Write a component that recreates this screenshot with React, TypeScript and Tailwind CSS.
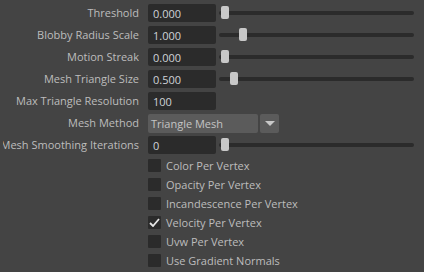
import { useState } from 'react'

type SliderRow = { label: string; value: string; pos?: number }

const fields: SliderRow[] = [
  { label: 'Threshold', value: '0.000', pos: 0 },
  { label: 'Blobby Radius Scale', value: '1.000', pos: 18 },
  { label: 'Motion Streak', value: '0.000', pos: 0 },
  { label: 'Mesh Triangle Size', value: '0.500', pos: 9 },
  { label: 'Max Triangle Resolution', value: '100' },
]

const checks = [
  { label: 'Color Per Vertex', on: false },
  { label: 'Opacity Per Vertex', on: false },
  { label: 'Incandescence Per Vertex', on: false },
  { label: 'Velocity Per Vertex', on: true },
  { label: 'Uvw Per Vertex', on: false },
  { label: 'Use Gradient Normals', on: false },
]

function Label({ text }: { text: string }) {
  return (
    <div className="ml-[3px] w-[136px] shrink-0 flex justify-end overflow-hidden whitespace-nowrap text-[#bdbdbd]">
      <span>{text}</span>
    </div>
  )
}

function Slider({ pos }: { pos: number }) {
  return (
    <div className="relative ml-[3px] w-[195px] h-[18px] flex items-center">
      <div className="w-full h-[4px] rounded-[2px] bg-[#2b2b2b]" />
      <div
        className="absolute top-[2px] w-[8px] h-[13px] rounded-[2px] bg-[#c8c8c8]"
        style={{ left: 2 + pos }}
      />
    </div>
  )
}

export default function App() {
  const [state, setState] = useState(checks.map(c => c.on))

  return (
    <div className="w-[424px] h-[272px] bg-[#444444] text-[11px] leading-[18px] font-['Open_Sans','Liberation_Sans',sans-serif] pt-[4px] overflow-hidden">
      <div className="flex flex-col gap-[4px]">
        {fields.map(f => (
          <div key={f.label} className="flex items-center h-[18px]">
            <Label text={f.label} />
            <div className="ml-[9px] w-[68px] h-[18px] rounded-[2px] bg-[#2b2b2b] text-[#cfd3d8] pl-[5px] pt-[1px]">
              {f.value}
            </div>
            {f.pos !== undefined && <Slider pos={f.pos} />}
          </div>
        ))}

        <div className="flex items-center h-[18px]">
          <Label text="Mesh Method" />
          <div className="ml-[9px] w-[110px] h-[19px] rounded-[2px] bg-[#5b5b5b] text-[#c4c4c4] pl-[3px] pt-[1px]">
            Triangle Mesh
          </div>
          <div className="ml-[2px] w-[19px] h-[19px] rounded-[2px] bg-[#5b5b5b] flex items-center justify-center">
            <div className="w-0 h-0 border-l-[5px] border-r-[5px] border-t-[5px] border-l-transparent border-r-transparent border-t-[#c8c8c8]" />
          </div>
        </div>

        <div className="flex items-center h-[18px]">
          <Label text="Mesh Smoothing Iterations" />
          <div className="ml-[9px] w-[68px] h-[18px] rounded-[2px] bg-[#2b2b2b] text-[#cfd3d8] pl-[5px] pt-[1px]">
            0
          </div>
          <Slider pos={0} />
        </div>
      </div>

      <div className="flex flex-col gap-[6px] mt-[5px] pl-[148px]">
        {checks.map((c, i) => (
          <label key={c.label} className="flex items-center h-[13px] gap-[5px] text-[#bdbdbd] cursor-pointer">
            <span
              className="w-[13px] h-[13px] rounded-[1px] bg-[#2b2b2b] flex items-center justify-center"
              onClick={() => setState(state.map((v, j) => (j === i ? !v : v)))}
            >
              {state[i] && (
                <svg width="11" height="9" viewBox="0 0 11 9">
                  <path d="M1 5 L4 8 L10 1" fill="none" stroke="#e6e6e6" strokeWidth="1.8" />
                </svg>
              )}
            </span>
            <span>{c.label}</span>
          </label>
        ))}
      </div>
    </div>
  )
}
